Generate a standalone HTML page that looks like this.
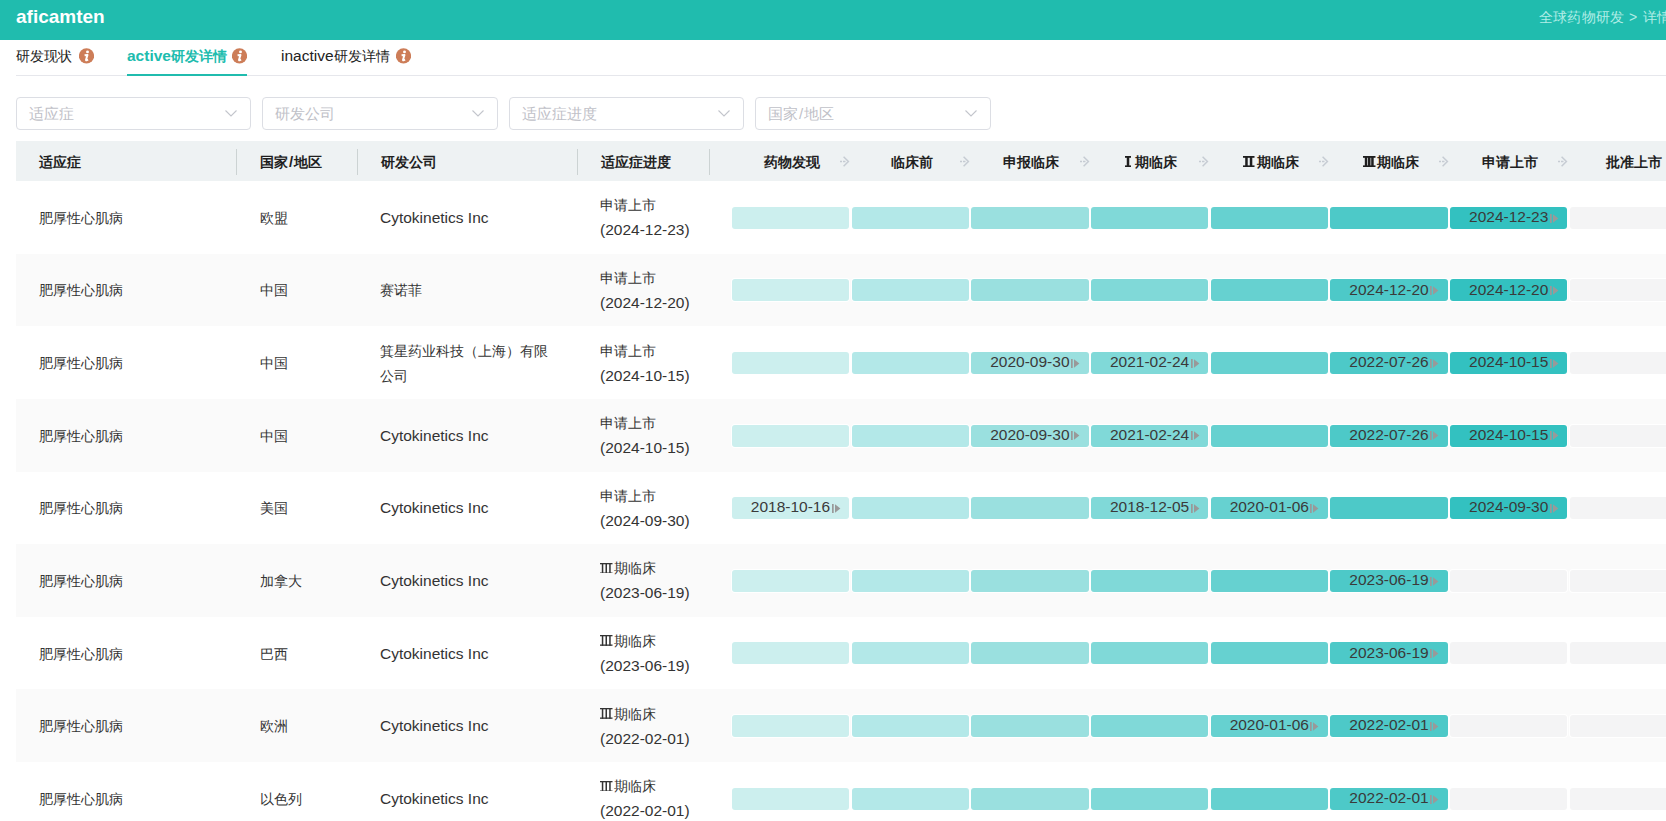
<!DOCTYPE html>
<html><head><meta charset="utf-8"><style>
*{box-sizing:border-box;margin:0;padding:0}
html,body{width:1666px;height:821px;overflow:hidden;background:#fff}
body{position:relative;font-family:"Liberation Sans",sans-serif;color:#333;font-size:14px}
.a{position:absolute;white-space:nowrap}
.ic>svg{display:block}
.l{font-size:15.5px}
#top{position:absolute;left:0;top:0;width:1666px;height:40px;background:#20bcae}
.brand{left:16px;top:6px;font-size:19px;font-weight:bold;color:#fff;line-height:22px}
.crumb{left:1538.5px;top:9px;font-size:14px;color:#b0ede6;line-height:16px}
.tab{top:48px;font-size:14px;line-height:16px;color:#222}
.tab svg{position:absolute;top:0px}
.tabline{left:16px;top:75px;width:1650px;height:1px;background:#e6e7ec}
.tabact{left:127px;top:74px;width:120px;height:2px;background:#20bcae}
.sel{top:97px;height:33px;width:235px;border:1px solid #dcdee4;border-radius:4px;background:#fff}
.sel .ph{position:absolute;left:12px;top:7px;font-size:15px;line-height:18px;color:#bfc1c8}
.sel svg{position:absolute;right:13px;top:12px}
#thead{position:absolute;left:16px;top:141px;width:1650px;height:40px;background:#eef2f3}
.th{top:154px;font-size:14px;font-weight:bold;color:#1f1f1f;line-height:16px}
.div{top:149px;width:1px;height:26px;background:#ccd3d3}
.row{position:absolute;left:16px;width:1650px}
.td{font-size:14px;color:#333;line-height:25px}
.bar{position:absolute;height:22px;border-radius:3px;box-shadow:0 0 0 1px #fff}
.bar .d{position:absolute;right:19px;top:1.2px;font-size:15.5px;line-height:18px;color:#3a3a3a}
.rn{vertical-align:0}

.sl{font-size:15px;margin:0 1px}
.bar svg{position:absolute;right:8.5px;top:6.8px}
</style></head><body>

<div id="top"></div>
<div class="a brand">aficamten</div>
<div class="a crumb" style="letter-spacing:0.4px">全球药物研发</div><div class="a crumb" style="left:1629px">&gt;</div><div class="a crumb" style="left:1643px;letter-spacing:0.4px">详情</div>
<div class="a tab" style="left:16px">研发现状</div><div class="a ic" style="left:79px;top:48px"><svg width="15" height="16" viewBox="0 0 15 16"><circle cx="7.5" cy="7.9" r="7.6" fill="#cd7d58"/><circle cx="8.5" cy="3.9" r="1.45" fill="#fff"/><path d="M5.6 7.3 L8.5 6.9 L7.0 11.7 Q6.8 12.7 7.9 12.2 L9.1 11.6" fill="none" stroke="#fff" stroke-width="1.9" stroke-linejoin="round"/></svg></div>
<div class="a tab" style="left:127px;color:#20bcae;font-weight:bold"><span class="l">active</span>研发详情</div><div class="a ic" style="left:232px;top:48px"><svg width="15" height="16" viewBox="0 0 15 16"><circle cx="7.5" cy="7.9" r="7.6" fill="#cd7d58"/><circle cx="8.5" cy="3.9" r="1.45" fill="#fff"/><path d="M5.6 7.3 L8.5 6.9 L7.0 11.7 Q6.8 12.7 7.9 12.2 L9.1 11.6" fill="none" stroke="#fff" stroke-width="1.9" stroke-linejoin="round"/></svg></div>
<div class="a tab" style="left:281px"><span class="l">inactive</span>研发详情</div><div class="a ic" style="left:396px;top:48px"><svg width="15" height="16" viewBox="0 0 15 16"><circle cx="7.5" cy="7.9" r="7.6" fill="#cd7d58"/><circle cx="8.5" cy="3.9" r="1.45" fill="#fff"/><path d="M5.6 7.3 L8.5 6.9 L7.0 11.7 Q6.8 12.7 7.9 12.2 L9.1 11.6" fill="none" stroke="#fff" stroke-width="1.9" stroke-linejoin="round"/></svg></div>
<div class="a tabline"></div><div class="a tabact"></div>
<div class="a sel" style="left:16px;width:235px"><span class="ph">适应症</span><svg width="12" height="7" viewBox="0 0 12 7"><path d="M0.5 0.5 L6 6 L11.5 0.5" fill="none" stroke="#c3c5cc" stroke-width="1.1"/></svg></div>
<div class="a sel" style="left:262px;width:236px"><span class="ph">研发公司</span><svg width="12" height="7" viewBox="0 0 12 7"><path d="M0.5 0.5 L6 6 L11.5 0.5" fill="none" stroke="#c3c5cc" stroke-width="1.1"/></svg></div>
<div class="a sel" style="left:509px;width:235px"><span class="ph">适应症进度</span><svg width="12" height="7" viewBox="0 0 12 7"><path d="M0.5 0.5 L6 6 L11.5 0.5" fill="none" stroke="#c3c5cc" stroke-width="1.1"/></svg></div>
<div class="a sel" style="left:755px;width:236px"><span class="ph">国家<span class="sl">/</span>地区</span><svg width="12" height="7" viewBox="0 0 12 7"><path d="M0.5 0.5 L6 6 L11.5 0.5" fill="none" stroke="#c3c5cc" stroke-width="1.1"/></svg></div>
<div id="thead"></div>
<div class="a th" style="left:39px">适应症</div>
<div class="a th" style="left:260px">国家<span class="sl">/</span>地区</div>
<div class="a th" style="left:381px">研发公司</div>
<div class="a th" style="left:601px">适应症进度</div>
<div class="a div" style="left:236px"></div>
<div class="a div" style="left:357px"></div>
<div class="a div" style="left:577px"></div>
<div class="a div" style="left:709px"></div>
<div class="a th" style="left:731.95px;width:120px;text-align:center">药物发现</div>
<div class="a ic" style="left:840.10px;top:155.5px"><svg width="11" height="11" viewBox="0 0 11 11"><path d="M3.6 0.8 L8.4 5.5 L3.6 10.2" fill="none" stroke="#c6ccd3" stroke-width="1.5"/><path d="M0 5.5 H2 M3 5.5 H5.5" stroke="#c6ccd3" stroke-width="1.5"/></svg></div>
<div class="a th" style="left:851.66px;width:120px;text-align:center">临床前</div>
<div class="a ic" style="left:959.81px;top:155.5px"><svg width="11" height="11" viewBox="0 0 11 11"><path d="M3.6 0.8 L8.4 5.5 L3.6 10.2" fill="none" stroke="#c6ccd3" stroke-width="1.5"/><path d="M0 5.5 H2 M3 5.5 H5.5" stroke="#c6ccd3" stroke-width="1.5"/></svg></div>
<div class="a th" style="left:971.37px;width:120px;text-align:center">申报临床</div>
<div class="a ic" style="left:1079.52px;top:155.5px"><svg width="11" height="11" viewBox="0 0 11 11"><path d="M3.6 0.8 L8.4 5.5 L3.6 10.2" fill="none" stroke="#c6ccd3" stroke-width="1.5"/><path d="M0 5.5 H2 M3 5.5 H5.5" stroke="#c6ccd3" stroke-width="1.5"/></svg></div>
<div class="a th" style="left:1091.08px;width:120px;text-align:center"><svg class="rn" width="10" height="11.2" viewBox="0 0 10 11.2" fill="currentColor"><rect x="0" y="0" width="6.0" height="1.8"/><rect x="0" y="9.399999999999999" width="6.0" height="1.8"/><rect x="1.75" y="0" width="2.5" height="11.2"/></svg>期临床</div>
<div class="a ic" style="left:1199.23px;top:155.5px"><svg width="11" height="11" viewBox="0 0 11 11"><path d="M3.6 0.8 L8.4 5.5 L3.6 10.2" fill="none" stroke="#c6ccd3" stroke-width="1.5"/><path d="M0 5.5 H2 M3 5.5 H5.5" stroke="#c6ccd3" stroke-width="1.5"/></svg></div>
<div class="a th" style="left:1210.79px;width:120px;text-align:center"><svg class="rn" width="13.5" height="11.2" viewBox="0 0 13.5 11.2" fill="currentColor"><rect x="0" y="0" width="11.5" height="1.8"/><rect x="0" y="9.399999999999999" width="11.5" height="1.8"/><rect x="2.20" y="0" width="2.5" height="11.2"/><rect x="6.80" y="0" width="2.5" height="11.2"/></svg>期临床</div>
<div class="a ic" style="left:1318.94px;top:155.5px"><svg width="11" height="11" viewBox="0 0 11 11"><path d="M3.6 0.8 L8.4 5.5 L3.6 10.2" fill="none" stroke="#c6ccd3" stroke-width="1.5"/><path d="M0 5.5 H2 M3 5.5 H5.5" stroke="#c6ccd3" stroke-width="1.5"/></svg></div>
<div class="a th" style="left:1330.50px;width:120px;text-align:center"><svg class="rn" width="14" height="11.2" viewBox="0 0 14 11.2" fill="currentColor"><rect x="0" y="0" width="12.5" height="1.8"/><rect x="0" y="9.399999999999999" width="12.5" height="1.8"/><rect x="1.80" y="0" width="2.5" height="11.2"/><rect x="5.00" y="0" width="2.5" height="11.2"/><rect x="8.20" y="0" width="2.5" height="11.2"/></svg>期临床</div>
<div class="a ic" style="left:1438.65px;top:155.5px"><svg width="11" height="11" viewBox="0 0 11 11"><path d="M3.6 0.8 L8.4 5.5 L3.6 10.2" fill="none" stroke="#c6ccd3" stroke-width="1.5"/><path d="M0 5.5 H2 M3 5.5 H5.5" stroke="#c6ccd3" stroke-width="1.5"/></svg></div>
<div class="a th" style="left:1450.21px;width:120px;text-align:center">申请上市</div>
<div class="a ic" style="left:1558.36px;top:155.5px"><svg width="11" height="11" viewBox="0 0 11 11"><path d="M3.6 0.8 L8.4 5.5 L3.6 10.2" fill="none" stroke="#c6ccd3" stroke-width="1.5"/><path d="M0 5.5 H2 M3 5.5 H5.5" stroke="#c6ccd3" stroke-width="1.5"/></svg></div>
<div class="a th" style="left:1605.5px">批准上市</div>
<div class="row" style="top:181.000px;height:72.625px;background:#fff"></div>
<div class="a td" style="left:39px;top:205.812px">肥厚性心肌病</div>
<div class="a td" style="left:260px;top:205.812px">欧盟</div>
<div class="a td" style="left:380px;top:204.812px"><span class="l">Cytokinetics Inc</span></div>
<div class="a td" style="left:600px;top:192.312px"><span style="position:relative;top:1px">申请上市</span><br><span class="l">(2024-12-23)</span></div>
<div class="bar" style="left:731.80px;top:206.713px;width:117.3px;background:#ccefee"></div>
<div class="bar" style="left:851.51px;top:206.713px;width:117.3px;background:#b3e8e8"></div>
<div class="bar" style="left:971.22px;top:206.713px;width:117.3px;background:#9ae0df"></div>
<div class="bar" style="left:1090.93px;top:206.713px;width:117.3px;background:#80d9d8"></div>
<div class="bar" style="left:1210.64px;top:206.713px;width:117.3px;background:#66d1d0"></div>
<div class="bar" style="left:1330.35px;top:206.713px;width:117.3px;background:#4dc9c8"></div>
<div class="bar" style="left:1450.06px;top:206.713px;width:117.3px;background:#33c1c0"><span class="d">2024-12-23</span><svg width="9" height="10" viewBox="0 0 9 10"><rect x="0" y="0" width="1.7" height="9" fill="#999"/><path d="M3 0.3 L8.4 4.5 L3 8.7 Z" fill="#999"/></svg></div>
<div class="bar" style="left:1569.77px;top:206.713px;width:117.3px;background:#f4f4f5"></div>
<div class="row" style="top:253.625px;height:72.625px;background:#fafafa"></div>
<div class="a td" style="left:39px;top:278.438px">肥厚性心肌病</div>
<div class="a td" style="left:260px;top:278.438px">中国</div>
<div class="a td" style="left:380px;top:278.438px">赛诺菲</div>
<div class="a td" style="left:600px;top:264.938px"><span style="position:relative;top:1px">申请上市</span><br><span class="l">(2024-12-20)</span></div>
<div class="bar" style="left:731.80px;top:279.337px;width:117.3px;background:#ccefee"></div>
<div class="bar" style="left:851.51px;top:279.337px;width:117.3px;background:#b3e8e8"></div>
<div class="bar" style="left:971.22px;top:279.337px;width:117.3px;background:#9ae0df"></div>
<div class="bar" style="left:1090.93px;top:279.337px;width:117.3px;background:#80d9d8"></div>
<div class="bar" style="left:1210.64px;top:279.337px;width:117.3px;background:#66d1d0"></div>
<div class="bar" style="left:1330.35px;top:279.337px;width:117.3px;background:#4dc9c8"><span class="d">2024-12-20</span><svg width="9" height="10" viewBox="0 0 9 10"><rect x="0" y="0" width="1.7" height="9" fill="#999"/><path d="M3 0.3 L8.4 4.5 L3 8.7 Z" fill="#999"/></svg></div>
<div class="bar" style="left:1450.06px;top:279.337px;width:117.3px;background:#33c1c0"><span class="d">2024-12-20</span><svg width="9" height="10" viewBox="0 0 9 10"><rect x="0" y="0" width="1.7" height="9" fill="#999"/><path d="M3 0.3 L8.4 4.5 L3 8.7 Z" fill="#999"/></svg></div>
<div class="bar" style="left:1569.77px;top:279.337px;width:117.3px;background:#f4f4f5"></div>
<div class="row" style="top:326.250px;height:72.625px;background:#fff"></div>
<div class="a td" style="left:39px;top:351.062px">肥厚性心肌病</div>
<div class="a td" style="left:260px;top:351.062px">中国</div>
<div class="a td" style="left:380px;top:338.562px">箕星药业科技（上海）有限<br>公司</div>
<div class="a td" style="left:600px;top:337.562px"><span style="position:relative;top:1px">申请上市</span><br><span class="l">(2024-10-15)</span></div>
<div class="bar" style="left:731.80px;top:351.962px;width:117.3px;background:#ccefee"></div>
<div class="bar" style="left:851.51px;top:351.962px;width:117.3px;background:#b3e8e8"></div>
<div class="bar" style="left:971.22px;top:351.962px;width:117.3px;background:#9ae0df"><span class="d">2020-09-30</span><svg width="9" height="10" viewBox="0 0 9 10"><rect x="0" y="0" width="1.7" height="9" fill="#999"/><path d="M3 0.3 L8.4 4.5 L3 8.7 Z" fill="#999"/></svg></div>
<div class="bar" style="left:1090.93px;top:351.962px;width:117.3px;background:#80d9d8"><span class="d">2021-02-24</span><svg width="9" height="10" viewBox="0 0 9 10"><rect x="0" y="0" width="1.7" height="9" fill="#999"/><path d="M3 0.3 L8.4 4.5 L3 8.7 Z" fill="#999"/></svg></div>
<div class="bar" style="left:1210.64px;top:351.962px;width:117.3px;background:#66d1d0"></div>
<div class="bar" style="left:1330.35px;top:351.962px;width:117.3px;background:#4dc9c8"><span class="d">2022-07-26</span><svg width="9" height="10" viewBox="0 0 9 10"><rect x="0" y="0" width="1.7" height="9" fill="#999"/><path d="M3 0.3 L8.4 4.5 L3 8.7 Z" fill="#999"/></svg></div>
<div class="bar" style="left:1450.06px;top:351.962px;width:117.3px;background:#33c1c0"><span class="d">2024-10-15</span><svg width="9" height="10" viewBox="0 0 9 10"><rect x="0" y="0" width="1.7" height="9" fill="#999"/><path d="M3 0.3 L8.4 4.5 L3 8.7 Z" fill="#999"/></svg></div>
<div class="bar" style="left:1569.77px;top:351.962px;width:117.3px;background:#f4f4f5"></div>
<div class="row" style="top:398.875px;height:72.625px;background:#fafafa"></div>
<div class="a td" style="left:39px;top:423.688px">肥厚性心肌病</div>
<div class="a td" style="left:260px;top:423.688px">中国</div>
<div class="a td" style="left:380px;top:422.688px"><span class="l">Cytokinetics Inc</span></div>
<div class="a td" style="left:600px;top:410.188px"><span style="position:relative;top:1px">申请上市</span><br><span class="l">(2024-10-15)</span></div>
<div class="bar" style="left:731.80px;top:424.587px;width:117.3px;background:#ccefee"></div>
<div class="bar" style="left:851.51px;top:424.587px;width:117.3px;background:#b3e8e8"></div>
<div class="bar" style="left:971.22px;top:424.587px;width:117.3px;background:#9ae0df"><span class="d">2020-09-30</span><svg width="9" height="10" viewBox="0 0 9 10"><rect x="0" y="0" width="1.7" height="9" fill="#999"/><path d="M3 0.3 L8.4 4.5 L3 8.7 Z" fill="#999"/></svg></div>
<div class="bar" style="left:1090.93px;top:424.587px;width:117.3px;background:#80d9d8"><span class="d">2021-02-24</span><svg width="9" height="10" viewBox="0 0 9 10"><rect x="0" y="0" width="1.7" height="9" fill="#999"/><path d="M3 0.3 L8.4 4.5 L3 8.7 Z" fill="#999"/></svg></div>
<div class="bar" style="left:1210.64px;top:424.587px;width:117.3px;background:#66d1d0"></div>
<div class="bar" style="left:1330.35px;top:424.587px;width:117.3px;background:#4dc9c8"><span class="d">2022-07-26</span><svg width="9" height="10" viewBox="0 0 9 10"><rect x="0" y="0" width="1.7" height="9" fill="#999"/><path d="M3 0.3 L8.4 4.5 L3 8.7 Z" fill="#999"/></svg></div>
<div class="bar" style="left:1450.06px;top:424.587px;width:117.3px;background:#33c1c0"><span class="d">2024-10-15</span><svg width="9" height="10" viewBox="0 0 9 10"><rect x="0" y="0" width="1.7" height="9" fill="#999"/><path d="M3 0.3 L8.4 4.5 L3 8.7 Z" fill="#999"/></svg></div>
<div class="bar" style="left:1569.77px;top:424.587px;width:117.3px;background:#f4f4f5"></div>
<div class="row" style="top:471.500px;height:72.625px;background:#fff"></div>
<div class="a td" style="left:39px;top:496.312px">肥厚性心肌病</div>
<div class="a td" style="left:260px;top:496.312px">美国</div>
<div class="a td" style="left:380px;top:495.312px"><span class="l">Cytokinetics Inc</span></div>
<div class="a td" style="left:600px;top:482.812px"><span style="position:relative;top:1px">申请上市</span><br><span class="l">(2024-09-30)</span></div>
<div class="bar" style="left:731.80px;top:497.212px;width:117.3px;background:#ccefee"><span class="d">2018-10-16</span><svg width="9" height="10" viewBox="0 0 9 10"><rect x="0" y="0" width="1.7" height="9" fill="#999"/><path d="M3 0.3 L8.4 4.5 L3 8.7 Z" fill="#999"/></svg></div>
<div class="bar" style="left:851.51px;top:497.212px;width:117.3px;background:#b3e8e8"></div>
<div class="bar" style="left:971.22px;top:497.212px;width:117.3px;background:#9ae0df"></div>
<div class="bar" style="left:1090.93px;top:497.212px;width:117.3px;background:#80d9d8"><span class="d">2018-12-05</span><svg width="9" height="10" viewBox="0 0 9 10"><rect x="0" y="0" width="1.7" height="9" fill="#999"/><path d="M3 0.3 L8.4 4.5 L3 8.7 Z" fill="#999"/></svg></div>
<div class="bar" style="left:1210.64px;top:497.212px;width:117.3px;background:#66d1d0"><span class="d">2020-01-06</span><svg width="9" height="10" viewBox="0 0 9 10"><rect x="0" y="0" width="1.7" height="9" fill="#999"/><path d="M3 0.3 L8.4 4.5 L3 8.7 Z" fill="#999"/></svg></div>
<div class="bar" style="left:1330.35px;top:497.212px;width:117.3px;background:#4dc9c8"></div>
<div class="bar" style="left:1450.06px;top:497.212px;width:117.3px;background:#33c1c0"><span class="d">2024-09-30</span><svg width="9" height="10" viewBox="0 0 9 10"><rect x="0" y="0" width="1.7" height="9" fill="#999"/><path d="M3 0.3 L8.4 4.5 L3 8.7 Z" fill="#999"/></svg></div>
<div class="bar" style="left:1569.77px;top:497.212px;width:117.3px;background:#f4f4f5"></div>
<div class="row" style="top:544.125px;height:72.625px;background:#fafafa"></div>
<div class="a td" style="left:39px;top:568.938px">肥厚性心肌病</div>
<div class="a td" style="left:260px;top:568.938px">加拿大</div>
<div class="a td" style="left:380px;top:567.938px"><span class="l">Cytokinetics Inc</span></div>
<div class="a td" style="left:600px;top:555.438px"><span style="position:relative;top:1px"><svg class="rn" width="14" height="10.8" viewBox="0 0 14 10.8" fill="currentColor"><rect x="0" y="0" width="12.5" height="1.3"/><rect x="0" y="9.5" width="12.5" height="1.3"/><rect x="1.80" y="0" width="1.5" height="10.8"/><rect x="5.50" y="0" width="1.5" height="10.8"/><rect x="9.20" y="0" width="1.5" height="10.8"/></svg>期临床</span><br><span class="l">(2023-06-19)</span></div>
<div class="bar" style="left:731.80px;top:569.837px;width:117.3px;background:#ccefee"></div>
<div class="bar" style="left:851.51px;top:569.837px;width:117.3px;background:#b3e8e8"></div>
<div class="bar" style="left:971.22px;top:569.837px;width:117.3px;background:#9ae0df"></div>
<div class="bar" style="left:1090.93px;top:569.837px;width:117.3px;background:#80d9d8"></div>
<div class="bar" style="left:1210.64px;top:569.837px;width:117.3px;background:#66d1d0"></div>
<div class="bar" style="left:1330.35px;top:569.837px;width:117.3px;background:#4dc9c8"><span class="d">2023-06-19</span><svg width="9" height="10" viewBox="0 0 9 10"><rect x="0" y="0" width="1.7" height="9" fill="#999"/><path d="M3 0.3 L8.4 4.5 L3 8.7 Z" fill="#999"/></svg></div>
<div class="bar" style="left:1450.06px;top:569.837px;width:117.3px;background:#f4f4f5"></div>
<div class="bar" style="left:1569.77px;top:569.837px;width:117.3px;background:#f4f4f5"></div>
<div class="row" style="top:616.750px;height:72.625px;background:#fff"></div>
<div class="a td" style="left:39px;top:641.562px">肥厚性心肌病</div>
<div class="a td" style="left:260px;top:641.562px">巴西</div>
<div class="a td" style="left:380px;top:640.562px"><span class="l">Cytokinetics Inc</span></div>
<div class="a td" style="left:600px;top:628.062px"><span style="position:relative;top:1px"><svg class="rn" width="14" height="10.8" viewBox="0 0 14 10.8" fill="currentColor"><rect x="0" y="0" width="12.5" height="1.3"/><rect x="0" y="9.5" width="12.5" height="1.3"/><rect x="1.80" y="0" width="1.5" height="10.8"/><rect x="5.50" y="0" width="1.5" height="10.8"/><rect x="9.20" y="0" width="1.5" height="10.8"/></svg>期临床</span><br><span class="l">(2023-06-19)</span></div>
<div class="bar" style="left:731.80px;top:642.462px;width:117.3px;background:#ccefee"></div>
<div class="bar" style="left:851.51px;top:642.462px;width:117.3px;background:#b3e8e8"></div>
<div class="bar" style="left:971.22px;top:642.462px;width:117.3px;background:#9ae0df"></div>
<div class="bar" style="left:1090.93px;top:642.462px;width:117.3px;background:#80d9d8"></div>
<div class="bar" style="left:1210.64px;top:642.462px;width:117.3px;background:#66d1d0"></div>
<div class="bar" style="left:1330.35px;top:642.462px;width:117.3px;background:#4dc9c8"><span class="d">2023-06-19</span><svg width="9" height="10" viewBox="0 0 9 10"><rect x="0" y="0" width="1.7" height="9" fill="#999"/><path d="M3 0.3 L8.4 4.5 L3 8.7 Z" fill="#999"/></svg></div>
<div class="bar" style="left:1450.06px;top:642.462px;width:117.3px;background:#f4f4f5"></div>
<div class="bar" style="left:1569.77px;top:642.462px;width:117.3px;background:#f4f4f5"></div>
<div class="row" style="top:689.375px;height:72.625px;background:#fafafa"></div>
<div class="a td" style="left:39px;top:714.188px">肥厚性心肌病</div>
<div class="a td" style="left:260px;top:714.188px">欧洲</div>
<div class="a td" style="left:380px;top:713.188px"><span class="l">Cytokinetics Inc</span></div>
<div class="a td" style="left:600px;top:700.688px"><span style="position:relative;top:1px"><svg class="rn" width="14" height="10.8" viewBox="0 0 14 10.8" fill="currentColor"><rect x="0" y="0" width="12.5" height="1.3"/><rect x="0" y="9.5" width="12.5" height="1.3"/><rect x="1.80" y="0" width="1.5" height="10.8"/><rect x="5.50" y="0" width="1.5" height="10.8"/><rect x="9.20" y="0" width="1.5" height="10.8"/></svg>期临床</span><br><span class="l">(2022-02-01)</span></div>
<div class="bar" style="left:731.80px;top:715.087px;width:117.3px;background:#ccefee"></div>
<div class="bar" style="left:851.51px;top:715.087px;width:117.3px;background:#b3e8e8"></div>
<div class="bar" style="left:971.22px;top:715.087px;width:117.3px;background:#9ae0df"></div>
<div class="bar" style="left:1090.93px;top:715.087px;width:117.3px;background:#80d9d8"></div>
<div class="bar" style="left:1210.64px;top:715.087px;width:117.3px;background:#66d1d0"><span class="d">2020-01-06</span><svg width="9" height="10" viewBox="0 0 9 10"><rect x="0" y="0" width="1.7" height="9" fill="#999"/><path d="M3 0.3 L8.4 4.5 L3 8.7 Z" fill="#999"/></svg></div>
<div class="bar" style="left:1330.35px;top:715.087px;width:117.3px;background:#4dc9c8"><span class="d">2022-02-01</span><svg width="9" height="10" viewBox="0 0 9 10"><rect x="0" y="0" width="1.7" height="9" fill="#999"/><path d="M3 0.3 L8.4 4.5 L3 8.7 Z" fill="#999"/></svg></div>
<div class="bar" style="left:1450.06px;top:715.087px;width:117.3px;background:#f4f4f5"></div>
<div class="bar" style="left:1569.77px;top:715.087px;width:117.3px;background:#f4f4f5"></div>
<div class="row" style="top:762.000px;height:72.625px;background:#fff"></div>
<div class="a td" style="left:39px;top:786.812px">肥厚性心肌病</div>
<div class="a td" style="left:260px;top:786.812px">以色列</div>
<div class="a td" style="left:380px;top:785.812px"><span class="l">Cytokinetics Inc</span></div>
<div class="a td" style="left:600px;top:773.312px"><span style="position:relative;top:1px"><svg class="rn" width="14" height="10.8" viewBox="0 0 14 10.8" fill="currentColor"><rect x="0" y="0" width="12.5" height="1.3"/><rect x="0" y="9.5" width="12.5" height="1.3"/><rect x="1.80" y="0" width="1.5" height="10.8"/><rect x="5.50" y="0" width="1.5" height="10.8"/><rect x="9.20" y="0" width="1.5" height="10.8"/></svg>期临床</span><br><span class="l">(2022-02-01)</span></div>
<div class="bar" style="left:731.80px;top:787.712px;width:117.3px;background:#ccefee"></div>
<div class="bar" style="left:851.51px;top:787.712px;width:117.3px;background:#b3e8e8"></div>
<div class="bar" style="left:971.22px;top:787.712px;width:117.3px;background:#9ae0df"></div>
<div class="bar" style="left:1090.93px;top:787.712px;width:117.3px;background:#80d9d8"></div>
<div class="bar" style="left:1210.64px;top:787.712px;width:117.3px;background:#66d1d0"></div>
<div class="bar" style="left:1330.35px;top:787.712px;width:117.3px;background:#4dc9c8"><span class="d">2022-02-01</span><svg width="9" height="10" viewBox="0 0 9 10"><rect x="0" y="0" width="1.7" height="9" fill="#999"/><path d="M3 0.3 L8.4 4.5 L3 8.7 Z" fill="#999"/></svg></div>
<div class="bar" style="left:1450.06px;top:787.712px;width:117.3px;background:#f4f4f5"></div>
<div class="bar" style="left:1569.77px;top:787.712px;width:117.3px;background:#f4f4f5"></div>
</body></html>
